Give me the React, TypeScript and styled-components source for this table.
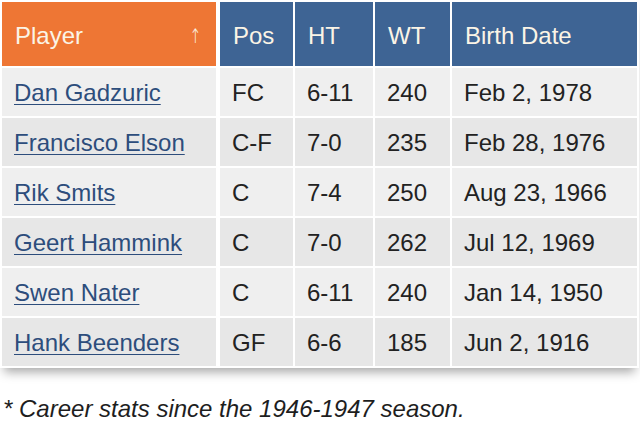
import React from "react";
import styled, { createGlobalStyle } from "styled-components";

const Global = createGlobalStyle`
  html, body { margin: 0; padding: 0; background: #ffffff; }
  body { font-family: "Liberation Sans", Arial, Helvetica, sans-serif; }
`;

const Page = styled.div`
  width: 640px;
  height: 439px;
  overflow: hidden;
`;

const Table = styled.table`
  width: 639px;
  table-layout: fixed;
  border-collapse: separate;
  border-spacing: 2px;
  background: #ffffff;
  box-shadow: 0 8px 10px -4px rgba(0, 0, 0, 0.35);
  font-size: 24px;
`;

const Th = styled.th<{ $sorted?: boolean; $first?: boolean }>`
  height: 64px;
  padding: 3px 0 0 13px;
  text-align: left;
  font-weight: normal;
  color: #fbf4e6;
  background: ${(p) => (p.$sorted ? "#ee7634" : "#3e6494")};
  border-right: ${(p) => (p.$first ? "2px solid #ffffff" : "none")};
  box-sizing: border-box;
`;

const HeadInner = styled.div`
  display: flex;
  align-items: center;
  justify-content: space-between;
  padding-right: 12px;
`;

const Arrow = styled.span`
  font-size: 20px;
  font-family: "DejaVu Sans", sans-serif;
  font-weight: 200;
  transform: scaleX(0.7);
`;

const Tr = styled.tr<{ $alt: boolean }>`
  background: ${(p) => (p.$alt ? "#e7e7e7" : "#efefef")};
`;

const Td = styled.td<{ $first?: boolean }>`
  height: 48px;
  padding: 2px 0 0 12px;
  color: #222222;
  white-space: nowrap;
  border-right: ${(p) => (p.$first ? "2px solid #ffffff" : "none")};
  box-sizing: border-box;
`;

const PlayerLink = styled.a`
  color: #2d4d7c;
  text-decoration: underline;
  text-underline-offset: 3px;
  text-decoration-thickness: 1px;
`;

const Note = styled.p`
  margin: 26px 0 0 3px;
  font-size: 24px;
  line-height: 30px;
  font-style: italic;
  color: #1e1e1e;
`;

const players = [
  ["Dan Gadzuric", "FC", "6-11", "240", "Feb 2, 1978"],
  ["Francisco Elson", "C-F", "7-0", "235", "Feb 28, 1976"],
  ["Rik Smits", "C", "7-4", "250", "Aug 23, 1966"],
  ["Geert Hammink", "C", "7-0", "262", "Jul 12, 1969"],
  ["Swen Nater", "C", "6-11", "240", "Jan 14, 1950"],
  ["Hank Beenders", "GF", "6-6", "185", "Jun 2, 1916"],
];

export default function App() {
  return (
    <Page>
      <Global />
      <Table>
        <colgroup>
          <col style={{ width: 216 }} />
          <col style={{ width: 73 }} />
          <col style={{ width: 78 }} />
          <col style={{ width: 75 }} />
          <col style={{ width: 185 }} />
        </colgroup>
        <thead>
          <tr>
            <Th $sorted $first>
              <HeadInner>
                <span>Player</span>
                <Arrow>↑</Arrow>
              </HeadInner>
            </Th>
            <Th>Pos</Th>
            <Th>HT</Th>
            <Th>WT</Th>
            <Th>Birth Date</Th>
          </tr>
        </thead>
        <tbody>
          {players.map((p, i) => (
            <Tr key={p[0]} $alt={i % 2 === 1}>
              <Td $first>
                <PlayerLink href="#">{p[0]}</PlayerLink>
              </Td>
              <Td>{p[1]}</Td>
              <Td>{p[2]}</Td>
              <Td>{p[3]}</Td>
              <Td>{p[4]}</Td>
            </Tr>
          ))}
        </tbody>
      </Table>
      <Note>* Career stats since the 1946-1947 season.</Note>
    </Page>
  );
}
